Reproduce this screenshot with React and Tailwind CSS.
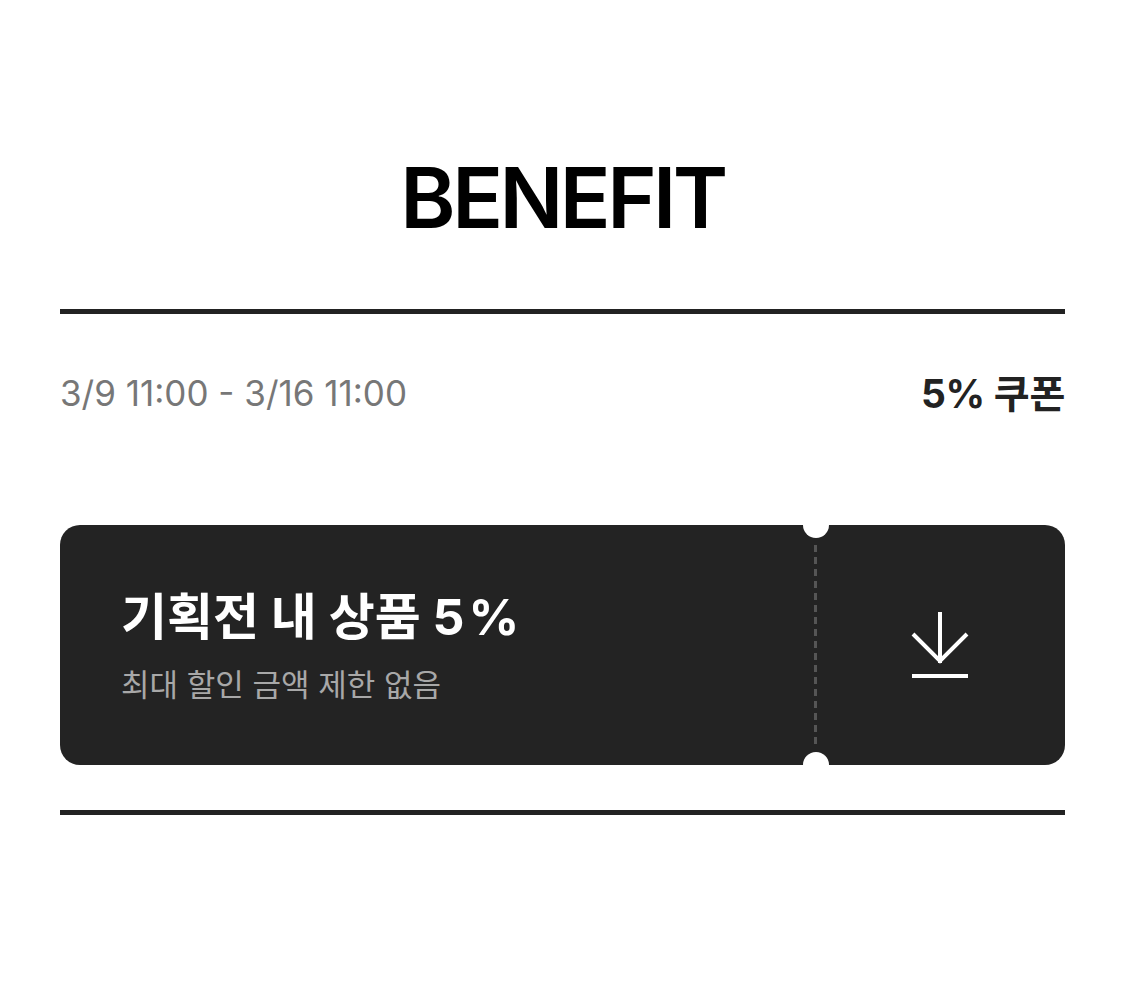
export default function App() {
  return (
    <div
      className="min-h-screen bg-white px-[60px]"
      style={{ fontFamily: "Inter, 'Noto Sans CJK KR', 'Noto Sans', sans-serif" }}
    >
      <h1 className="pt-[156px] h-[242px] text-center text-[84px] leading-none font-semibold tracking-[-3.5px] text-black">
        BENEFIT
      </h1>

      <div className="mt-[67px] h-[5px] bg-[#222]" />

      <div className="mt-[62px] flex h-[34px] items-center justify-between">
        <span className="text-[35px] leading-none text-[#777]">
          3/9 11:00 - 3/16 11:00
        </span>
        <span className="text-[39px] leading-none font-bold text-[#222] tracking-[-0.3px]">
          5% 쿠폰
        </span>
      </div>

      <div className="mt-[115px] flex h-[240px] rounded-[20px] bg-[#232323]">
        <div className="flex flex-1 flex-col pl-[61px] pt-[64px]">
          <p className="text-[50px] leading-[56px] font-bold text-white">
            기획전 내 상품 <span className="tracking-[4px]">5</span>%
          </p>
          <p className="mt-[22px] text-[31px] leading-[36px] text-[#a8a8a8]">
            최대 할인 금액 제한 없음
          </p>
        </div>

        <div className="relative w-[3px]">
          <div className="absolute left-1/2 top-0 h-[26px] w-[26px] -translate-x-1/2 -translate-y-1/2 rounded-full bg-white" />
          <div className="absolute left-0 top-[20px] bottom-[20px] w-[3px] bg-[repeating-linear-gradient(to_bottom,#555_0_7px,transparent_7px_12px)]" />
          <div className="absolute left-1/2 bottom-0 h-[26px] w-[26px] -translate-x-1/2 translate-y-1/2 rounded-full bg-white" />
        </div>

        <div className="flex w-[248px] items-center justify-center pr-[3px]">
          <svg width="60" height="70" viewBox="0 0 60 70" fill="none" stroke="white" strokeWidth="4">
            <path d="M30 2 V53" />
            <path d="M3 24 L30 51 L57 24" />
            <path d="M2 66 H58" />
          </svg>
        </div>
      </div>

      <div className="mt-[45px] h-[5px] bg-[#222]" />
    </div>
  );
}
